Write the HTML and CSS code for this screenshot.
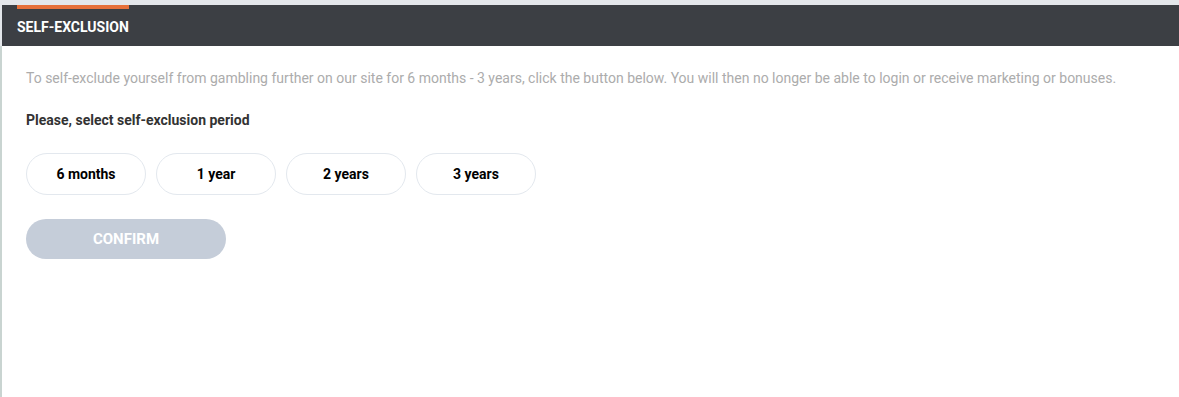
FILE: index.html
```html
<!DOCTYPE html>
<html lang="en">
<head>
    <meta charset="UTF-8">
    <title>Self-exclusion</title>
    <link rel="stylesheet" href="styles.css">
</head>
<body>
    <div class="panel">
        <div class="panel-header">
            <span class="panel-title">SELF-EXCLUSION</span>
        </div>
        <div class="panel-body">
            <p class="intro">To self-exclude yourself from gambling further on our site for 6 months - 3 years, click the button below. You will then no longer be able to login or receive marketing or bonuses.</p>
            <p class="label">Please, select self-exclusion period</p>
            <div class="periods">
                <button class="period">6 months</button>
                <button class="period">1 year</button>
                <button class="period">2 years</button>
                <button class="period">3 years</button>
            </div>
            <button class="confirm" disabled>CONFIRM</button>
        </div>
    </div>
</body>
</html>
```

FILE: styles.css
```css
* {
    box-sizing: border-box;
    font-family: Roboto, 'Liberation Sans', sans-serif;
}

body {
    margin: 0;
    background: #e4e7eb;
    height: 397px;
    overflow: hidden;
}

.panel {
    margin-top: 5px;
    height: 392px;
    display: flex;
    flex-direction: column;
}

.panel-header {
    margin-left: 2px;
    height: 41px;
    background: #3c3f44;
    padding-left: 15px;
    display: flex;
}

.panel-title {
    position: relative;
    color: #fff;
    font-size: 14px;
    font-weight: 700;
    line-height: 44px;
}

.panel-title::before {
    content: "";
    position: absolute;
    left: 0;
    top: 0;
    width: 100%;
    height: 4px;
    background: #e6703a;
}

.panel-body {
    flex: 1;
    background: #fff;
    border-left: 2px solid #c9d4d1;
    padding: 22px 24px;
}

.intro {
    margin: 0;
    color: #acacac;
    font-size: 14px;
    line-height: 20px;
}

.label {
    margin: 22px 0 0;
    color: #333;
    font-size: 14px;
    font-weight: 700;
    line-height: 20px;
}

.periods {
    display: flex;
    gap: 10px;
    margin-top: 23px;
}

.period {
    width: 120px;
    height: 42px;
    padding-bottom: 2px;
    border: 1px solid #e3e8ee;
    border-radius: 21px;
    background: #fff;
    color: #000;
    font-size: 14px;
    font-weight: 700;
    cursor: pointer;
}

.confirm {
    display: block;
    margin-top: 24px;
    width: 200px;
    height: 40px;
    border: none;
    border-radius: 20px;
    background: #c5cdd9;
    color: #fff;
    font-size: 15px;
    font-weight: 700;
}
```
